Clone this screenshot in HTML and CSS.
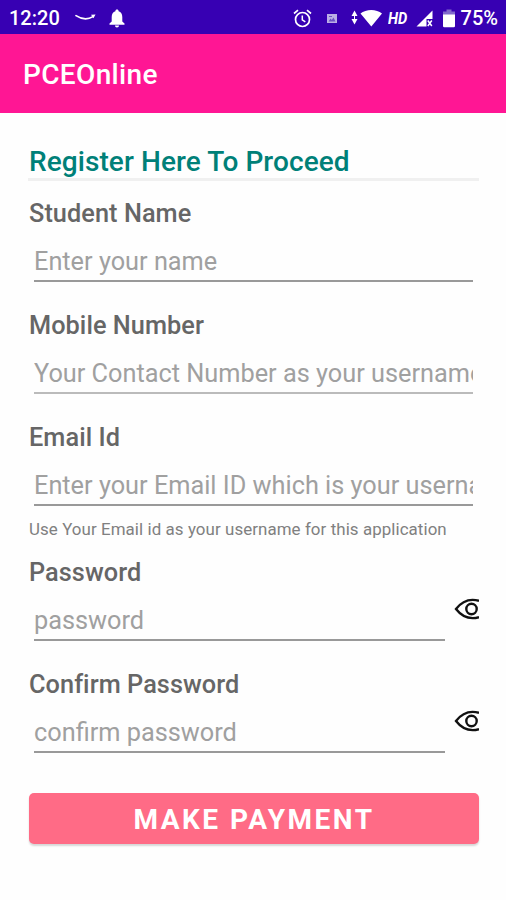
FILE: index.html
```html
<!DOCTYPE html>
<html lang="en">
<head>
<meta charset="utf-8">
<title>PCEOnline</title>
<link rel="stylesheet" href="styles.css">
</head>
<body>
<div class="status">
  <span class="clock">12:20</span>
  <svg class="smile" width="22" height="8" viewBox="0 0 22 8"><path d="M1 1.6Q10 7.500 18 2.600" fill="none" stroke="#fff" stroke-width="1.700" stroke-linecap="round"/><path d="M16 .8L20.500.4 18.400 4.200" fill="#fff"/></svg>
  <svg class="bell" width="16" height="19" viewBox="0 0 16 19"><path fill="#fff" d="M8 .5c-1 0-1.600.7-1.600 1.700C4 3 2.700 5 2.700 8v4.500L.5 14.600V15.700h15V14.600L13.300 12.500V8c0-3-1.300-5-3.700-5.800C9.600 1.200 9 .5 8 .5zM6 16.500h4c0 1.300-.8 2-2 2s-2-.7-2-2z"/></svg>
  <span class="space"></span>
  <svg class="alarm" width="19" height="19" viewBox="0 0 19 19" fill="none" stroke="#fff"><circle cx="9.500" cy="10.500" r="7" stroke-width="1.700"/><path d="M9.300 6.500v4.300l3 2" stroke-width="1.500"/><path d="M1 4.500L5 1.200M18 4.500L14 1.200" stroke-width="1.700"/></svg>
  <svg class="pic" width="10" height="9" viewBox="0 0 10 9"><path fill="#bbaee5" d="M0 0h10v9H0z"/><path fill="#6b50c4" d="M1.500 7.500l2-3 1.300 1.500L6.500 3.500l2 4zM2 2h3v1H2z"/></svg>
  <svg class="wifi" width="31" height="19" viewBox="0 0 31 19" fill="#fff"><path d="M.5 7L3.500 1.500 6.500 7zM.5 10h6l-3 5.500zM3 6h1v5H3zM9.500 4.500C15-.2 25.500-.2 31 4.500L20.300 17.500z"/></svg>
  <span class="hd"><span>HD</span></span>
  <svg class="signal" width="17" height="17" viewBox="0 0 17 17"><path fill="#fff" d="M16.500.5V9H10.500v7.500H.5z"/><path d="M11.800 10.500l4 5.500m0-5.500l-4 5.500" stroke="#fff" stroke-width="1.500"/></svg>
  <svg class="battery" width="12" height="19" viewBox="0 0 12 19"><path fill="#8068cc" d="M3.500.5h5v2H12V7H0V2.500h3.500z"/><path fill="#fff" d="M0 5.500h12V17q0 1.300-1.300 1.300H1.300Q0 18.300 0 17z"/></svg>
  <span class="percent">75%</span>
</div>
<header class="appbar"><h1>PCEOnline</h1></header>
<main>
  <h2>Register Here To Proceed</h2>
  <form>
    <div class="field">
      <label for="name">Student Name</label>
      <input id="name" type="text" placeholder="Enter your name">
    </div>
    <div class="field mobile">
      <label for="mobile">Mobile Number</label>
      <input id="mobile" type="tel" placeholder="Your Contact Number as your username">
    </div>
    <div class="field email">
      <label for="email">Email Id</label>
      <input id="email" type="text" placeholder="Enter your Email ID which is your username">
      <p>Use Your Email id as your username for this application</p>
    </div>
    <div class="field secret">
      <label for="pass">Password</label>
      <input id="pass" type="password" placeholder="password">
      <svg class="eye" width="25" height="22" viewBox="0 0 25 22" fill="none" stroke="#111" stroke-width="2.400"><path d="M25 2.800C14-.2 7 4.500 2 11c5 6.500 12 11.200 23 8.200"/><circle cx="17.500" cy="11" r="5.200"/></svg>
    </div>
    <div class="field secret">
      <label for="confirm">Confirm Password</label>
      <input id="confirm" type="password" placeholder="confirm password">
      <svg class="eye" width="25" height="22" viewBox="0 0 25 22" fill="none" stroke="#111" stroke-width="2.400"><path d="M25 2.800C14-.2 7 4.500 2 11c5 6.500 12 11.200 23 8.200"/><circle cx="17.500" cy="11" r="5.200"/></svg>
    </div>
    <button type="button">MAKE PAYMENT</button>
  </form>
</main>
</body>
</html>
```
FILE: styles.css
```css
* { box-sizing: border-box; }
body {
  margin: 0;
  min-height: 900px;
  background: #fefefe;
  font-family: Roboto, "Liberation Sans", sans-serif;
}
.status {
  display: flex;
  align-items: center;
  height: 34px;
  padding: 2px 8px 0 9px;
  background: #3700b3;
  color: #fff;
  font-size: 20px;
  font-weight: 500;
  line-height: 32px;
}
.status svg { flex: none; }
.smile { margin-left: 15px; }
.bell { margin-left: 12px; }
.space { flex: 1; }
.pic { margin-left: 15px; }
.wifi { margin-left: 14px; }
.hd { width: 20px; margin-left: 6px; font-size: 17px; font-style: italic; font-weight: 700; }
.hd span { display: inline-block; transform: scaleX(.86); transform-origin: left; }
.signal { margin-left: 8px; }
.battery { margin-left: 10px; }
.percent { margin-left: 6px; }
.appbar {
  display: flex;
  align-items: center;
  height: 79px;
  padding: 3px 23px 0;
  background: #ff1694;
}
h1 { margin: 0; color: #fff; font-size: 28px; font-weight: 500; line-height: 34px; letter-spacing: .35px; }
main { padding: 33px 27px 0 28px; }
h2 {
  margin: 0 0 17px;
  height: 35px;
  padding-left: 1px;
  border-bottom: 3px solid #f0f0f0;
  color: #008078;
  font-size: 28px;
  font-weight: 500;
  line-height: 31px;
  letter-spacing: .08px;
  white-space: nowrap;
}
form { padding-top: 1px; }
.field { position: relative; height: 112px; }
.email { height: 135px; }
label {
  display: block;
  padding-left: 1px;
  color: #666;
  font-size: 25.3px;
  font-weight: 500;
  line-height: 30px;
  letter-spacing: .06px;
}
input {
  display: block;
  width: 439px;
  height: 46px;
  margin: 7px 0 0 6px;
  padding: 6px 0 0;
  border: 0;
  border-bottom: 2px solid #999;
  border-radius: 0;
  outline: 0;
  background: transparent;
  color: #555;
  font-family: inherit;
  font-size: 25.3px;
  line-height: 30px;
}
.mobile input { border-bottom-color: #bbb; }
input::placeholder { color: #a0a0a0; opacity: 1; }
.secret input { width: 411px; }
.eye { position: absolute; right: 0; top: 40px; }
p { margin: 12px 0 0; padding-left: 1px; color: #808080; font-size: 16.9px; line-height: 22px; letter-spacing: .08px; white-space: nowrap; }
button {
  display: block;
  width: 450px;
  height: 51px;
  margin: 11px 0 0 1px;
  padding: 2px 0 0;
  border: 0;
  border-radius: 5px;
  background: #ff6b86;
  box-shadow: 0 2px 2px rgba(0, 0, 0, .16);
  color: #fff;
  font-family: inherit;
  font-size: 28px;
  font-weight: 700;
  letter-spacing: 2.5px;
}
```
